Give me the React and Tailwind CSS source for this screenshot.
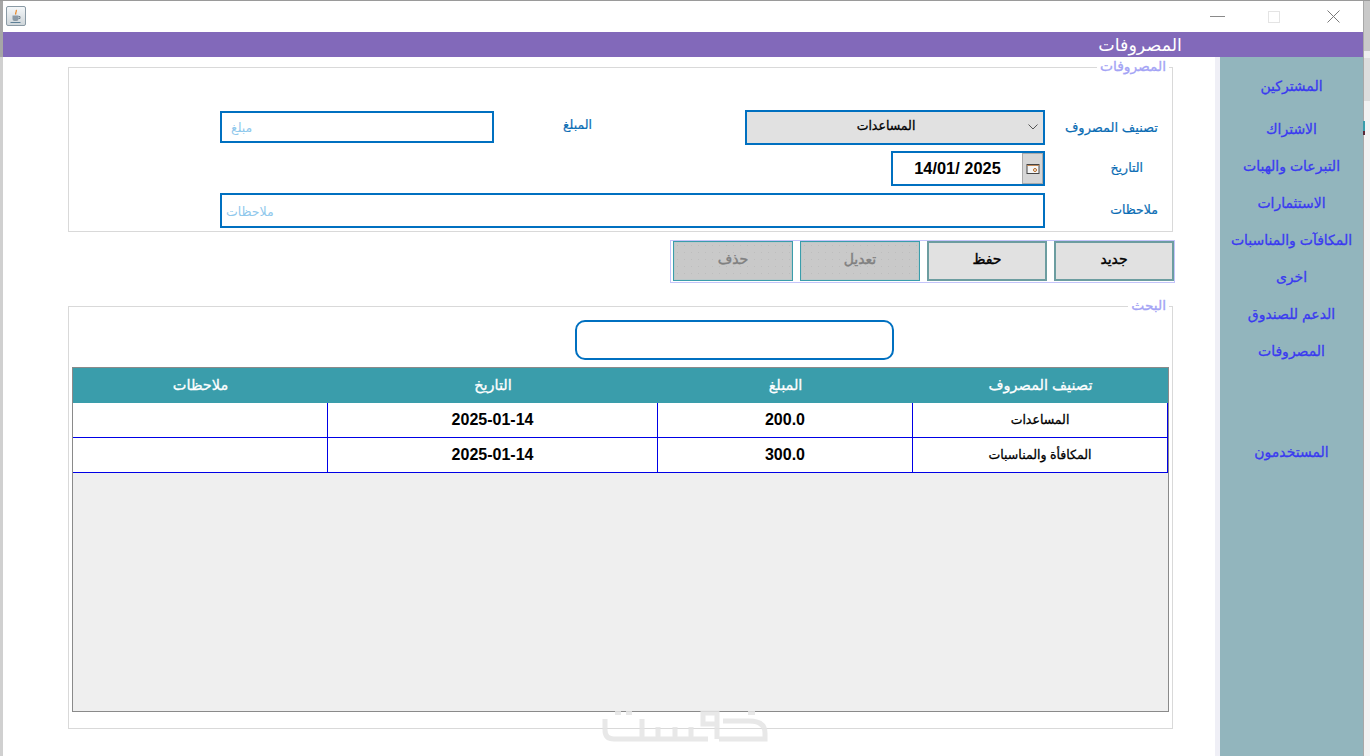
const font = { fontFamily: '"Liberation Sans", "DejaVu Sans", sans-serif' };

const sideItems = ['المشتركين', 'الاشتراك', 'التبرعات والهبات', 'الاستثمارات', 'المكافآت والمناسبات', 'اخرى', 'الدعم للصندوق', 'المصروفات'];

const rows = [
  { type: 'المساعدات', amount: '200.0', date: '2025-01-14' },
  { type: 'المكافأة والمناسبات', amount: '300.0', date: '2025-01-14' },
];

function JavaIcon() {
  return (
    <div className="w-[20px] h-[20px] ml-[3px] mt-[5px] rounded-[2px] border border-[#8a9aa5] bg-gradient-to-b from-[#f4f7f9] to-[#cfd6da] flex items-center justify-center">
      <svg width="14" height="15" viewBox="0 0 14 15" fill="none">
        <path d="M7 1c1.5 1.5-1.5 2.5 0 4.5" stroke="#e8892b" strokeWidth="1.3" />
        <path d="M3.5 6.5h6v3.5a2 2 0 0 1-2 2h-2a2 2 0 0 1-2-2z" fill="#8b9aa6" />
        <path d="M9.5 7.5h1.5v2h-1.5" stroke="#6f7f8b" />
        <path d="M1.5 13.5h10" stroke="#5d7f96" />
      </svg>
    </div>
  );
}

function Legend({ children }) {
  return (
    <span className="absolute right-[3px] top-[-8px] bg-white px-[3px] text-[13.8px] leading-[14px] text-[#a3a3f5] [-webkit-text-stroke:0.3px_#a3a3f5]">
      {children}
    </span>
  );
}

function ActionButton({ label, disabled }) {
  return (
    <button
      className={
        'w-[120px] h-[40px] pb-[3px] text-[14px] [-webkit-text-stroke:0.4px_currentColor] ' +
        (disabled
          ? 'border border-[#3a9dab] shadow-[inset_0_0_0_1px_#bcc8c9] text-[#808080] bg-[#c9c9c9] bg-[radial-gradient(#bdbdbd_0.6px,transparent_0.6px)] bg-[size:7px_7px]'
          : 'bg-[#e1e1e1] border-2 border-[#6c9da0] text-black')
      }
    >
      {label}
    </button>
  );
}

export default function App() {
  return (
    <div style={font} className="w-[1370px] h-[756px] overflow-hidden relative bg-white flex flex-col border-t border-[#9a9a9a]">
      {/* title bar */}
      <div className="h-[31px] flex border-l-[3px] border-[#a6a6a6]">
        <JavaIcon />
        <div className="flex-1" />
        <div className="w-[180px] flex items-center mr-[7px]">
          <div className="w-[15px] h-px bg-[#8a8a8a] ml-[27px] mb-[1px]" />
          <div className="w-[12px] h-[12px] border border-[#e4e4e4] ml-[43px]" />
          <svg width="13" height="13" viewBox="0 0 13 13" className="ml-[47px]">
            <path d="M0.5 0.5l12 12M12.5 0.5l-12 12" stroke="#7a7a7a" strokeWidth="1" />
          </svg>
        </div>
      </div>

      {/* purple bar */}
      <div className="h-[25px] flex border-l-[3px] border-[#a6a6a6]">
        <div className="flex-1 bg-[#8269ba] flex justify-end pr-[181px] pt-[2px] items-center text-[17.5px] text-white leading-none">
          المصروفات
        </div>
        <div className="w-[7px]" />
      </div>

      <div className="flex-1 flex min-h-0 border-l-[3px] border-[#d0d0d0]">
        {/* main column */}
        <div className="w-[1212px] pl-[65px] pt-[10px]">
          <div className="relative w-[1105px] h-[165px] border border-[#d9d9d9] pl-[151px] pt-[42px] text-[#0a6cb4] text-[12.5px]">
            <Legend>المصروفات</Legend>

            <div className="flex items-center h-[35px]">
              <div className="w-[274px] h-[32px] -mt-[1px] border-2 border-[#0070c0] flex items-center px-[9px] pt-[2px] text-[#8fc8ec]">
                مبلغ
              </div>
              <div className="w-[98px] text-right mb-[4px] [-webkit-text-stroke:0.2px_#0a6cb4]">المبلغ</div>
              <div className="w-[153px]" />
              <div className="w-[300px] h-[35px] border-2 border-[#0070c0] bg-[#e1e1e1] flex items-center justify-center relative text-black pr-[18px] pb-[2px] [-webkit-text-stroke:0.3px_black]">
                المساعدات
                <svg width="10" height="6" viewBox="0 0 10 6" className="absolute right-[5px] top-[12px]">
                  <path d="M0.5 0.5L5 5L9.5 0.5" stroke="#555" fill="none" />
                </svg>
              </div>
              <div className="w-[113px] text-right text-[13px] [-webkit-text-stroke:0.2px_#0a6cb4]">تصنيف المصروف</div>
            </div>

            <div className="flex items-center h-[35px] mt-[6px]">
              <div className="ml-[671px] w-[154px] h-[35px] border-2 border-[#0070c0] flex">
                <div className="flex-1 flex items-center justify-center text-black text-[16.4px] font-bold">14/01/ 2025</div>
                <div className="w-[21px] bg-[#d6d6d6] border border-[#aaa] flex items-center justify-center">
                  <svg width="14" height="12" viewBox="0 0 14 12" fill="none">
                    <rect x="1" y="1.5" width="12" height="9" stroke="#444" fill="#f5f5f5" />
                    <path d="M1 2.5h12" stroke="#c08a5a" />
                    <circle cx="9" cy="7" r="1.5" stroke="#b5651d" />
                  </svg>
                </div>
              </div>
              <div className="w-[98px] text-right [-webkit-text-stroke:0.2px_#0a6cb4]">التاريخ</div>
            </div>

            <div className="flex items-center h-[35px] mt-[7px]">
              <div className="w-[825px] h-[35px] border-2 border-[#0070c0] flex items-center px-[4px] pt-[3px] text-[#8fc8ec]">
                ملاحظات
              </div>
              <div className="w-[113px] text-right [-webkit-text-stroke:0.2px_#0a6cb4]">ملاحظات</div>
            </div>
          </div>

          {/* buttons */}
          <div className="flex mt-[8px] ml-[602px] w-[505px] h-[43px] border border-[#c4c4fa] gap-[7px] pl-[2px]">
            <ActionButton label="حذف" disabled />
            <ActionButton label="تعديل" disabled />
            <ActionButton label="حفظ" />
            <ActionButton label="جديد" />
          </div>

          {/* search + table */}
          <div className="relative w-[1105px] h-[423px] mt-[23px] border border-[#d9d9d9] pt-[3px] px-[3px]">
            <Legend>البحث</Legend>
            <div className="w-[319px] h-[40px] ml-[503px] mt-[10px] border-2 border-[#0070c0] rounded-[10px]" />

            <div className="mt-[7px] w-[1097px] h-[345px] border border-[#8a8a8a] bg-[#efefef]">
              <div className="h-[35px] bg-[#3a9dab] text-white text-[14.5px] flex items-center text-center [-webkit-text-stroke:0.3px_white]">
                <div className="w-[255px]">ملاحظات</div>
                <div className="w-[330px]">التاريخ</div>
                <div className="w-[255px]">المبلغ</div>
                <div className="flex-1">تصنيف المصروف</div>
              </div>
              {rows.map((r) => (
                <div key={r.amount} className="h-[35px] bg-white flex border-b border-[#0000e6] text-black text-center">
                  <div className="w-[255px] border-r border-[#0000e6]" />
                  <div className="w-[330px] border-r border-[#0000e6] flex items-center justify-center text-[16px] font-bold">{r.date}</div>
                  <div className="w-[255px] border-r border-[#0000e6] flex items-center justify-center text-[16px] font-bold">{r.amount}</div>
                  <div className="flex-1 border-r border-[#0000e6] flex items-center justify-center text-[12.5px] [-webkit-text-stroke:0.3px_black]">{r.type}</div>
                </div>
              ))}
            </div>
          </div>
        </div>

        {/* side menu */}
        <div className="w-[5px] bg-[#efeff6]" />
        <div className="w-[143px] bg-[#92b5bd] pt-[5px] text-[#3a3af0] text-[14px] text-center [-webkit-text-stroke:0.3px_#3a3af0]">
          {sideItems.map((label, i) => (
            <div key={label} className={(i === 0 ? 'h-[49px]' : 'h-[37px]') + ' flex items-center justify-center'}>{label}</div>
          ))}
          <div className="h-[37px] mt-[64px] flex items-center justify-center">المستخدمون</div>
        </div>
        <div className="w-[7px]" />
      </div>

      {/* window edge on the right, behind the captured window */}
      <div className="absolute right-0 top-0 w-[7px] h-full flex flex-col bg-[#f3f3f3] border-l border-[#a8a8a8]">
        <div className="h-[50px] bg-[#c9c9c9]" />
        <div className="h-[7px] bg-[#efefef]" />
        <div className="h-[43px] bg-[#dedede]" />
        <div className="h-[20px]" />
        <div className="w-[2px] h-[10px] bg-[#3a9dab] -ml-[1px]" />
        <div className="w-[2px] h-[4px] bg-[#5a2a3a] -ml-[1px]" />
      </div>

      {/* khamsat watermark */}
      <svg width="166" height="36" viewBox="0 0 166 36" fill="none" className="absolute left-[602px] top-[707px]" stroke="#e4e4e4" strokeOpacity="0.85" strokeWidth="5">
        <path d="M3 11v11q0 9 9 9h94M40 31V11M56 31V19M73 31V19M89 31V19M101 5h14v11h-14zM115 16v15M121 13h26q16 0 16 12v6h-46" />
        <path d="M13 5h6M24 5h6M146 5h7" strokeWidth="4" />
      </svg>
    </div>
  );
}
